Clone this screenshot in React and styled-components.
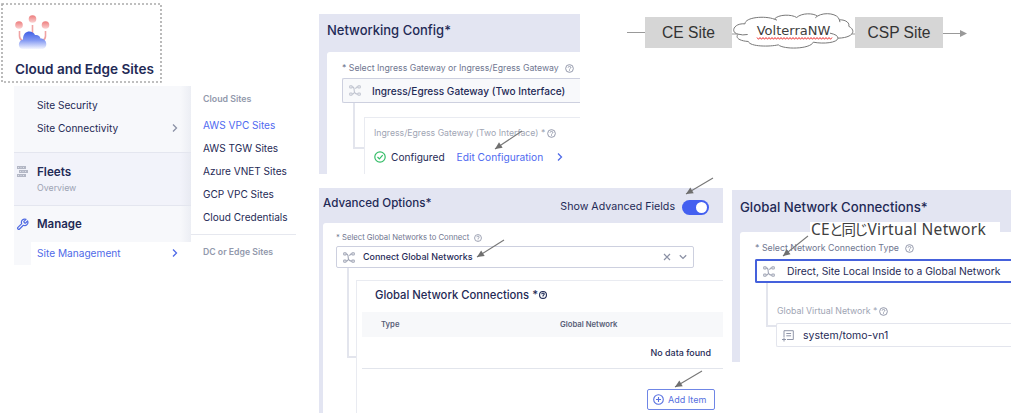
import React from "react";
import styled, { createGlobalStyle } from "styled-components";

const Global = createGlobalStyle`
  *{box-sizing:border-box}
  body{margin:0;background:#fff;font-family:Inter,"Liberation Sans",sans-serif;color:#1f2a56}
  svg{display:block;flex:none}
`;
const Page = styled.main`width:1020px;height:413px;display:flex;position:relative;overflow:hidden;background:#fff;`;
const Navigation = styled.section`width:319px;flex:none;padding-top:3px;`;
const ProductCard = styled.header`position:relative;width:161px;height:80px;margin-left:1px;padding:12px 0 0 14px;`;
const DottedFrame = styled.svg`position:absolute;inset:0;`;
const Text = styled.span`
  display:block;white-space:nowrap;line-height:16px;flex:none;
  font-size:${p => p.$size || 10.15}px;
  font-weight:${p => p.$weight || 400};
  letter-spacing:${p => p.$track || 0}px;
  color:${p => p.$color || "#1f2a56"};
`;
const ProductTitle = styled(Text)`margin-top:9px;`;
const Menu = styled.div`display:flex;margin:3px 0 0 14px;width:282px;height:179px;`;
const MenuMain = styled.nav`width:177px;background:linear-gradient(90deg,#f7f8fb 94%,#eceef4);`;
const MenuList = styled.div`height:66px;padding-top:7px;`;
const MenuItem = styled.div`height:23px;padding:0 12px 0 23px;display:flex;align-items:center;justify-content:space-between;`;
const Fleets = styled.div`height:54px;background:linear-gradient(90deg,#f2f3fa 94%,#e8eaf2);border:solid #e4e6ef;border-width:1px 0;padding:11px 0 0 2px;display:flex;gap:9px;`;
const Stack = styled.div`display:flex;flex-direction:column;gap:-1px;`;
const Manage = styled.div`height:36px;padding:0 0 0 2px;display:flex;align-items:center;gap:8px;`;
const ActiveItem = styled(MenuItem)`background:#fff;margin-left:17px;padding-left:6px;padding-bottom:2px;height:23px;`;
const Submenu = styled.nav`flex:1;`;
const SubGroup = styled.div`height:149px;border-bottom:1px solid #e6e8ef;padding:5px 0 0 12px;`;
const SubItem = styled.div`height:23px;display:flex;align-items:center;`;
const SubHeading = styled.div`height:${p => p.$h}px;display:flex;align-items:flex-start;`;
const SubFoot = styled.div`padding:9px 0 0 12px;`;

const Content = styled.section`width:701px;flex:none;`;
const TopRow = styled.div`height:188px;display:flex;align-items:flex-start;`;
const BottomRow = styled.div`height:225px;display:flex;align-items:flex-start;gap:9px;`;
const Panel = styled.section`
  width:${p => p.$w}px;height:${p => p.$h}px;margin-top:${p => p.$top || 0}px;
  background:#e3e5f2;padding-left:${p => p.$pad}px;flex:none;overflow:hidden;
`;
const PanelHead = styled.header`height:${p => p.$h}px;padding:${p => p.$top}px 14px 0 0;display:flex;justify-content:space-between;align-items:flex-start;`;
const Body = styled.div`background:#fff;border-radius:3px 0 0 0;height:230px;padding:${p => p.$top}px 0 0 ${p => p.$left}px;`;
const Label = styled.div`display:flex;align-items:center;height:16px;gap:${p => p.$gap ?? 6}px;`;
const Select = styled.div`
  display:flex;align-items:center;height:${p => p.$h}px;width:${p => p.$w ? p.$w + "px" : "auto"};
  margin-top:${p => p.$top || 0}px;padding:0 6px;gap:${p => p.$gap || 11}px;
  border:${p => p.$active ? "2px solid #4561dc" : "1px solid #cdd0df"};
  border-right-width:${p => p.$open ? 0 : 1}px;border-radius:${p => p.$open ? "2px 0 0 2px" : "2px"};
  background:${p => p.$fill || "#fff"};
`;
const Grow = styled.div`flex:1;`;
const SelectActions = styled.div`display:flex;align-items:center;gap:8px;`;
const Tree = styled.div`display:flex;`;
const Branch = styled.div`width:${p => p.$w}px;height:${p => p.$h}px;margin-left:11px;border:solid #e3e5ed;border-width:0 0 2px 2px;flex:none;`;
const Nested = styled.div`
  flex:1;min-width:0;margin-top:${p => p.$top}px;height:150px;
  border:solid #e9ebf1;border-width:1px 0 0 1px;padding:${p => p.$pad};
`;
const Configured = styled.div`display:flex;align-items:center;height:16px;margin-top:8px;gap:5px;`;
const Edit = styled.div`display:flex;align-items:center;gap:13px;margin-left:7px;`;
const TogglePair = styled.div`display:flex;align-items:center;gap:7px;margin-top:4px;`;
const Toggle = styled.div`width:27px;height:15px;border-radius:8px;background:#4460f0;padding:2px;display:flex;justify-content:flex-end;`;
const Knob = styled.i`width:11px;height:11px;border-radius:50%;background:#fff;`;
const TableHead = styled.div`height:25px;background:#f7f8fa;margin-top:9px;display:grid;grid-template-columns:179px 1fr;align-items:center;padding-left:19px;`;
const EmptyRow = styled.div`height:32px;border-bottom:1px solid #e2e5ec;display:flex;align-items:center;justify-content:flex-end;padding-right:12px;`;
const NestedTitle = styled.div`display:flex;align-items:center;gap:1px;padding-left:13px;`;
const AddButton = styled.button`
  width:68px;height:21px;margin:20px 8px 0 auto;padding:0 0 0 5px;background:#fff;
  border:1px solid #6f86e6;border-radius:2px;display:flex;align-items:center;gap:4px;font-family:inherit;
`;
const NetworkField = styled.div`margin:4px 0 0 -1px;height:24px;border:solid #e3e5ed;border-width:1px 0 1px 1px;border-radius:2px 0 0 2px;background:#fff;display:flex;align-items:center;gap:9px;padding:1px 0 0 5px;`;
const VirtualNetwork = styled.div`flex:1;padding-top:20px;`;

const Flow = styled.div`display:flex;align-items:center;margin:17px 0 0 47px;height:31px;`;
const FlowBox = styled.div`
  width:${p => p.$w}px;height:31px;background:#d6d6d6;color:#333;display:flex;align-items:center;justify-content:center;
  font:15.6px "Liberation Sans",sans-serif;white-space:nowrap;
`;
const Wire = styled.div`height:1px;width:18px;background:#999;`;
const CloudWrap = styled.div`position:relative;width:123px;height:40px;display:flex;align-items:center;justify-content:center;`;
const CloudDrawing = styled.svg`position:absolute;inset:0;overflow:visible;`;
const CloudText = styled.span`
  position:relative;top:-1.5px;white-space:nowrap;color:#404040;
  font:13px/18px "DejaVu Sans",sans-serif;
`;
const Annotations = styled.svg`position:absolute;inset:0;pointer-events:none;`;
const Note = styled.div`
  position:absolute;left:810px;top:222px;width:190px;height:15px;background:#fff;color:#404040;
  font:15.5px/14px "Noto Sans","Noto Sans CJK JP",sans-serif;white-space:nowrap;padding-left:1px;letter-spacing:.3px;
`;
const Kana = styled.span`font-size:14.5px;letter-spacing:-2px;margin:0 1px 0 -1px;`;

const Chevron = ({ color = "#8b91a5", down }) => (
  <svg width="8" height="10" viewBox="0 0 8 10" fill="none" stroke={color} strokeWidth="1.3">
    <path d={down ? "M.8 3.2 4 6.4 7.2 3.2" : "M2 1.5 5.5 5 2 8.5"} />
  </svg>
);
const Help = ({ color = "#8a90a4", size = 9, weight = 1 }) => (
  <svg width={size} height={size} viewBox="0 0 10 10" fill="none" stroke={color} strokeWidth={weight}>
    <circle cx="5" cy="5" r="4.3" /><path d="M3.5 4C3.5 2.1 6.6 2.2 6.5 4 6.4 5 5 4.9 5 6.2M5 7v.9" />
  </svg>
);
const Nodes = ({ color = "#a0a5b5" }) => (
  <svg width="12" height="11" viewBox="0 0 12 11" fill="none" stroke={color} strokeWidth="1.1">
    <rect x=".7" y=".8" width="2.4" height="2.2" rx=".8" /><rect x="8.9" y=".8" width="2.4" height="2.2" rx=".8" />
    <rect x=".7" y="8" width="2.4" height="2.2" rx=".8" /><rect x="8.9" y="8" width="2.4" height="2.2" rx=".8" />
    <path d="M3.1 1.9C5.200 1.900 5.200 3.500 5.200 5.500S6.500 9.100 8.900 9.100M3.100 9.100c1.200 0 1.700-.6 2-1.500M6.500 3.700c.4-1 .9-1.800 2.400-1.800" />
  </svg>
);
const SitesLogo = () => (
  <svg width="36" height="37" viewBox="0 0 36 37">
    <defs>
      <linearGradient id="cloud" x1="0" y1="0" x2="0" y2="1"><stop stopColor="#3f5fe6" /><stop offset=".5" stopColor="#8298f2" /><stop offset="1" stopColor="#f4f6ff" /></linearGradient>
      <linearGradient id="node" x1="0" y1="0" x2="0" y2="1"><stop stopColor="#ed7c7c" /><stop offset="1" stopColor="#fbd3d3" /></linearGradient>
    </defs>
    <g fill="none" stroke="#f0a3a3" strokeWidth="1.6"><path d="M4.5 16v5q0 3 3 5M17.5 10v12M30.5 16v5q0 3-3 5" /></g>
    <g fill="url(#node)"><circle cx="4" cy="10" r="3.8" /><circle cx="17.5" cy="4" r="3.8" /><circle cx="30.5" cy="10" r="3.8" /></g>
    <path d="M8 34C2.500 34 2.500 25.500 8 24.500c0-10 10-9.500 12-4.500 3-.5 5 1 5.500 3.500C33 23.500 33 34 27 34z" fill="url(#cloud)" />
  </svg>
);
const FleetMark = styled.svg`margin-top:2px;`;
const FleetIcon = () => (
  <FleetMark width="12" height="12" viewBox="0 0 12 12" fill="#b3b7c5">
    <path d="M1 0h9v3H1zM3 4h9v3H3zM1 8h9v3H1z" /><path d="M2 1.500h7M4 5.500h7M2 9.500h7" stroke="#e6e8f0" strokeDasharray="1 1.500" strokeWidth=".8" />
  </FleetMark>
);
const Wrench = () => (
  <svg width="13" height="13" viewBox="0 0 24 24" fill="none" stroke="#4f6ae2" strokeWidth="2.2" strokeLinejoin="round">
    <path d="M14.700 6.300a1 1 0 0 0 0 1.400l1.600 1.600a1 1 0 0 0 1.400 0l3.770-3.770a6 6 0 0 1-7.940 7.940l-6.910 6.910a2.120 2.120 0 0 1-3-3l6.910-6.910a6 6 0 0 1 7.940-7.940z" />
  </svg>
);
const Check = () => (
  <svg width="12" height="12" viewBox="0 0 12 12" fill="none" stroke="#35bd68" strokeWidth="1.2"><circle cx="6" cy="6" r="5.2" /><path d="m3.500 6 1.900 1.900 3.300-3.700" /></svg>
);
const Cross = () => (
  <svg width="8" height="8" viewBox="0 0 8 8" stroke="#8b91a5" strokeWidth="1.2"><path d="m1 1 6 6M7 1 1 7" /></svg>
);
const Plus = () => (
  <svg width="11" height="11" viewBox="0 0 11 11" fill="none" stroke="#566fe0" strokeWidth="1.1"><circle cx="5.5" cy="5.5" r="4.8" /><path d="M5.500 3v5M3 5.500h5" /></svg>
);
const RefIcon = () => (
  <svg width="12" height="12" viewBox="0 0 12 12" fill="none" stroke="#8f95a8" strokeWidth="1"><path d="M2 7V.7h9.300v8.800H5M4.300 3.500h4.800M4.300 5.800h4.800M0 9.500h4M2 7.500v4" /></svg>
);
const Arrow = ({ x1, y1, x2, y2 }) => {
  const angle = Math.atan2(y2 - y1, x2 - x1) * 180 / Math.PI;
  return <g><path d={`M${x1} ${y1} L${x2} ${y2}`} stroke="#777" strokeWidth="1.1" /><path d="M0 0-7-3.300V3.300Z" fill="#6f6f6f" transform={`translate(${x2} ${y2}) rotate(${angle})`} /></g>;
};
const squiggle = "M25 24.5" + " l1.5 1.8 l1.5-1.8".repeat(25);

const siteLinks = ["AWS VPC Sites", "AWS TGW Sites", "Azure VNET Sites", "GCP VPC Sites", "Cloud Credentials"];

export default function App() {
  return (
    <Page>
      <Global />
      <Navigation>
        <ProductCard>
          <DottedFrame width="161" height="80"><rect x="1" y="1" width="159" height="78" fill="none" stroke="#aaa" strokeWidth="1.6" strokeDasharray="2 2" /></DottedFrame>
          <SitesLogo />
          <ProductTitle $size={13.55} $weight={600}>Cloud and Edge Sites</ProductTitle>
        </ProductCard>
        <Menu>
          <MenuMain>
            <MenuList>
              <MenuItem><Text>Site Security</Text></MenuItem>
              <MenuItem><Text>Site Connectivity</Text><Chevron /></MenuItem>
            </MenuList>
            <Fleets><FleetIcon /><Stack><Text $size={11.7} $weight={600}>Fleets</Text><Text $size={8.8} $color="#9da3b4">Overview</Text></Stack></Fleets>
            <Manage><Wrench /><Text $size={11.5} $weight={600}>Manage</Text></Manage>
            <ActiveItem><Text $color="#4f6ae8">Site Management</Text><Chevron color="#4f6ae8" /></ActiveItem>
          </MenuMain>
          <Submenu>
            <SubGroup>
              <SubHeading $h={22}><Text $size={8.8} $weight={600} $color="#9299ac">Cloud Sites</Text></SubHeading>
              {siteLinks.map((name, i) => <SubItem key={name}><Text $size={10.05} $color={i ? undefined : "#4f6af0"}>{name}</Text></SubItem>)}
            </SubGroup>
            <SubFoot><Text $size={8.7} $weight={600} $color="#9299ac">DC or Edge Sites</Text></SubFoot>
          </Submenu>
        </Menu>
      </Navigation>
      <Content>
        <TopRow>
          <Panel $w={261} $h={160} $top={14} $pad={8}>
            <PanelHead $h={38} $top={8}><Text $size={13} $weight={500}>Networking Config*</Text></PanelHead>
            <Body $top={8} $left={15}>
              <Label><Text $size={8.72} $color="#6f7690">* Select Ingress Gateway or Ingress/Egress Gateway</Text><Help /></Label>
              <Select $top={2} $h={25} $open $fill="#f8f9fb"><Nodes color="#bfc3cf" /><Text $size={10.1} $weight={500}>Ingress/Egress Gateway (Two Interface)</Text></Select>
              <Tree><Branch $w={11} $h={46} />
                <Nested $top={14} $pad="7px 0 0 9px">
                  <Label $gap={2}><Text $size={8.7} $color="#a0a5b4">Ingress/Egress Gateway (Two Interface) *</Text><Help /></Label>
                  <Configured><Check /><Text>Configured</Text><Edit><Text $size={10.2} $color="#4f6af0">Edit Configuration</Text><Chevron color="#4f6ae8" /></Edit></Configured>
                </Nested>
              </Tree>
            </Body>
          </Panel>
          <Flow>
            <Wire /><FlowBox $w={87}>CE Site</FlowBox>
            <CloudWrap>
              <CloudDrawing width="123" height="40" fill="none" stroke="#777" strokeWidth="1">
                <path d="M0 21h5M117 21h6" stroke="#999" />
                <g transform="translate(-2 -7.500) scale(.3333)" strokeWidth="3">
                  <path d="M45 55C45 35 105 30 133 41 145 26 185 26 200 36 215 22 250 22 262 32 285 18 325 25 328 43 350 42 360 55 356 62 380 75 370 97 324 98 322 112 280 116 250 110 240 132 160 132 145 118 120 124 60 124 55 108 25 106 15 95 25 86 0 82 10 52 45 55Z" fill="#fff" />
                  <path d="M25 86q12 4 28 1M324 98q0-10-24-15M133 41l8 3M262 32l-6 5M328 43l2 7" />
                </g>
              </CloudDrawing>
              <CloudText>VolterraNW</CloudText>
              <CloudDrawing width="123" height="40" fill="none"><path d={squiggle} stroke="#f03535" strokeWidth="1" /></CloudDrawing>
            </CloudWrap>
            <FlowBox $w={88}>CSP Site</FlowBox>
            <svg width="25" height="8"><path d="M0 4.500h18" stroke="#999" /><path d="M17 1v7l7-3.500z" fill="#999" /></svg>
          </Flow>
        </TopRow>
        <BottomRow>
          <Panel $w={404} $h={225} $pad={4}>
            <PanelHead $h={35} $top={7}>
              <Text $size={11.6} $weight={500}>Advanced Options*</Text>
              <TogglePair><Text $size={10.65}>Show Advanced Fields</Text><Toggle><Knob /></Toggle></TogglePair>
            </PanelHead>
            <Body $top={7} $left={13}>
              <Label $gap={5}><Text $size={7.7} $color="#6f7690">* Select Global Networks to Connect</Text><Help size={8} /></Label>
              <Select $w={358} $h={22} $gap={8}><Nodes /><Text $size={8.95} $weight={500}>Connect Global Networks</Text><Grow /><SelectActions><Cross /><Chevron down /></SelectActions></Select>
              <Tree><Branch $w={9} $h={90} />
                <Nested $top={12} $pad="6px 0 0 5px">
                  <NestedTitle><Text $size={11.25} $weight={500}>Global Network Connections *</Text><Help color="#1f2a56" size={8} weight={1.4} /></NestedTitle>
                  <TableHead><Text $size={7.7} $weight={600} $color="#596078">Type</Text><Text $size={7.7} $weight={600} $color="#596078">Global Network</Text></TableHead>
                  <EmptyRow><Text $size={8.95} $weight={500}>No data found</Text></EmptyRow>
                  <AddButton><Plus /><Text $size={9} $color="#566fe0">Add Item</Text></AddButton>
                </Nested>
              </Tree>
            </Body>
          </Panel>
          <Panel $w={279} $h={172} $top={2} $pad={8}>
            <PanelHead $h={42} $top={9}><Text $size={13.2} $weight={500}>Global Network Connections*</Text></PanelHead>
            <Body $top={8} $left={15}>
              <Label><Text $size={8.8} $color="#6f7690">* Select Network Connection Type</Text><Help /></Label>
              <Select $top={3} $h={24} $gap={12} $open $active><Nodes /><Text $size={10.3}>Direct, Site Local Inside to a Global Network</Text></Select>
              <Tree><Branch $w={11} $h={44} />
                <VirtualNetwork>
                  <Label $gap={1}><Text $size={8.8} $color="#a0a5b4">Global Virtual Network *</Text><Help /></Label>
                  <NetworkField><RefIcon /><Text $size={10.5}>system/tomo-vn1</Text></NetworkField>
                </VirtualNetwork>
              </Tree>
            </Body>
          </Panel>
        </BottomRow>
      </Content>
      <Note>CE<Kana>と同じ</Kana>Virtual Network</Note>
      <Annotations width="1020" height="413">
        <Arrow x1={522} y1={131} x2={495} y2={149} />
        <Arrow x1={504} y1={240} x2={477} y2={257} />
        <Arrow x1={713} y1={178} x2={686} y2={194} />
        <Arrow x1={702} y1={371} x2={675} y2={387} />
        <Arrow x1={808} y1={236} x2={783} y2={256} />
      </Annotations>
    </Page>
  );
}
